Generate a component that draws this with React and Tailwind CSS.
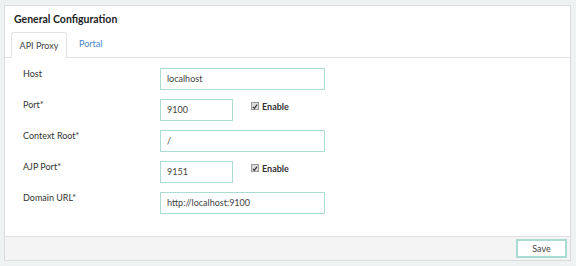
import React from 'react'

function Field({ label, value, width, enable }) {
    return (
        <div className="flex items-start">
            <div className="w-[137px] pt-[1px] leading-[9px] text-[9px] text-[#333]">{label}</div>
            <div className="flex items-start">
                <div className={`${width} h-[22px] border border-[#a9dcd3] bg-white flex items-center px-[6px] text-[9px] text-[#444]`}>{value}</div>
                {enable && (
                    <label className="flex items-center gap-[3px] ml-[18px] mt-[3px] leading-[9px] text-[9px] font-bold text-[#333]">
                        <span className="w-[8px] h-[8px] border border-[#999] bg-[#ddd] flex items-center justify-center">
                            <svg viewBox="0 0 10 10" className="w-[7px] h-[7px]" fill="none" stroke="#333" strokeWidth={2}>
                                <path d="M1.5 5.5l2.5 2.5 4.5-6" />
                            </svg>
                        </span>
                        Enable
                    </label>
                )}
            </div>
        </div>
    )
}

function App() {
    return (
        <div className="w-[576px] h-[266px] bg-[#eef2f2] pt-[5px] pl-[4px] pr-[5px] pb-[5px]" style={{ fontFamily: 'Lato, "Open Sans", sans-serif' }}>
            <div className="h-full bg-white border border-[#dcdcdc] flex flex-col">
                <div className="px-[9px] pt-[6px] text-[10.5px] font-bold text-[#222]">General Configuration</div>
                <div className="flex items-end mt-[3px] px-[6px] border-b border-[#e2e2e2]">
                    <div className="w-[56px] h-[26px] border border-b-0 border-[#e2e2e2] rounded-t-[3px] bg-white -mb-px flex items-center justify-center text-[9px] text-[#444]">API Proxy</div>
                    <div className="h-[26px] px-[12px] flex items-center text-[9px] text-[#4a86c5]">Portal</div>
                </div>
                <div className="flex-1 flex flex-col gap-[9px] pl-[18px] pt-[10px]">
                    <Field label="Host" value="localhost" width="w-[165px]" />
                    <Field label="Port*" value="9100" width="w-[73px]" enable />
                    <Field label="Context Root*" value="/" width="w-[165px]" />
                    <Field label="AJP Port*" value="9151" width="w-[73px]" enable />
                    <Field label="Domain URL*" value="http://localhost:9100" width="w-[165px]" />
                </div>
                <div className="h-[24px] bg-[#f4f4f4] border-t border-[#e2e2e2] flex items-center justify-end pr-[3px]">
                    <button className="w-[51px] h-[19px] border-2 border-[#a9dcd3] bg-white text-[9px] text-[#444]">Save</button>
                </div>
            </div>
        </div>
    )
}

export default App
